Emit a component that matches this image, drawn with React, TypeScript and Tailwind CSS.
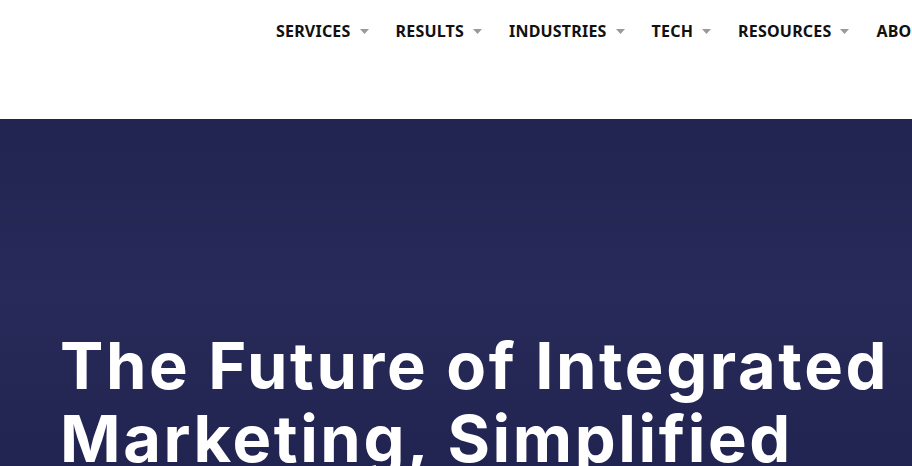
const navItems = ['SERVICES', 'RESULTS', 'INDUSTRIES', 'TECH', 'RESOURCES', 'ABOUT'];

function Caret() {
  return (
    <svg width="9" height="5" viewBox="0 0 9 5" className="ml-[9px] shrink-0" aria-hidden>
      <path d="M0 0h9L4.5 5z" fill="#9a9a9a" />
    </svg>
  );
}

export default function App() {
  return (
    <div className="w-[912px] h-[466px] overflow-hidden bg-white">
      {/* Top header */}
      <header className="h-[119px] bg-white flex items-start">
        <nav className="ml-[276px] mt-[21px] flex items-center gap-[27px] whitespace-nowrap font-['Noto_Sans',sans-serif] text-[16px] font-bold tracking-[0.2px] text-[#111111] leading-[20px]">
          {navItems.map((item) => (
            <div key={item} className="flex items-center">
              <span>{item}</span>
              <Caret />
            </div>
          ))}
        </nav>
      </header>

      {/* Hero */}
      <section className="h-[347px] bg-gradient-to-b from-[#212451] via-[#282a59] to-[#212350] pl-[60px] pt-[210px]">
        <h1 className="font-['Inter',sans-serif] font-bold text-white text-[65px] leading-[73px] tracking-[2.6px] whitespace-nowrap">
          The Future of Integrated
          <br />
          Marketing, Simplified
        </h1>
      </section>
    </div>
  );
}
